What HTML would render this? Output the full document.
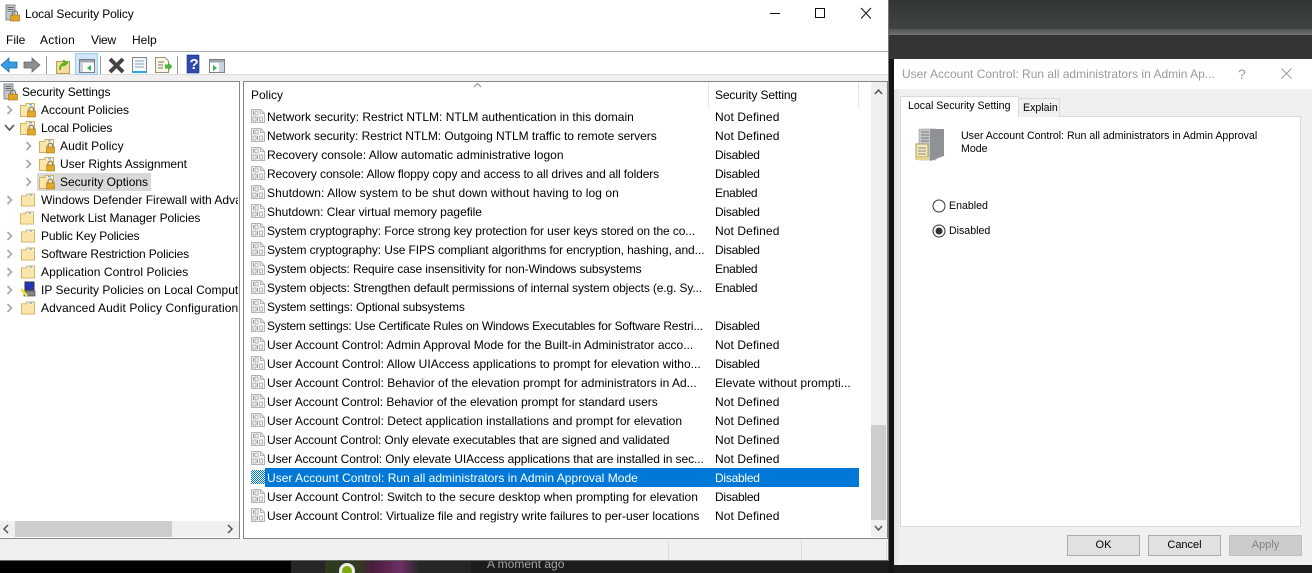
<!DOCTYPE html>
<html><head><meta charset="utf-8"><style>
html,body{margin:0;padding:0;width:1312px;height:573px;overflow:hidden;background:#1c1c1c}
body{position:relative;font:12px/16px "Liberation Sans",sans-serif;color:#000}
.a{position:absolute}
.t{position:absolute;white-space:nowrap;overflow:hidden}
svg{position:absolute;overflow:visible}
.r{position:absolute;left:267px;width:441px;height:16px;white-space:nowrap;overflow:hidden}
.s{position:absolute;left:715px;width:140px;height:16px;white-space:nowrap;overflow:hidden}
.nd{letter-spacing:.1px}
.di,.en{letter-spacing:-.25px}
.d{font-size:10.6px}
.btn{position:absolute;top:535px;width:71px;height:19px;border:1px solid #adadad;background:#e1e1e1;text-align:center;line-height:19px;font-size:11px}
</style></head><body>
<svg width="0" height="0" style="position:absolute">
<defs>
<symbol id="pol" viewBox="0 0 14 14" overflow="visible">
<path d="M.5.5H9.500L13.500 4.500V13.500H.5Z" fill="#f6f6f6" stroke="#b4b4b4"/><path d="M9.500.5V4.500H13.500" fill="none" stroke="#b4b4b4"/>
<rect x="2" y="2" width="1" height="4" fill="#9a9a9a"/><rect x="4" y="2" width="3" height="4" fill="none" stroke="#a6a6a6" stroke-width=".8"/>
<rect x="2" y="8" width="3" height="4" fill="none" stroke="#a6a6a6" stroke-width=".8"/><rect x="6" y="8" width="1" height="4" fill="#9a9a9a"/><rect x="8.500" y="8" width="3" height="4" fill="none" stroke="#a6a6a6" stroke-width=".8"/>
</symbol>
<symbol id="fld" viewBox="0 0 15 14" overflow="visible">
<path d="M.5 2.500H6V.5H14.500V13.500H.5Z" fill="#fbe6a8" stroke="#d0b06a"/><path d="M8 1.500H13.500V3H8Z" fill="#fff"/><rect x="9" y="1" width="3" height="1.500" fill="#7fb4dc"/>
</symbol>
<symbol id="lck" viewBox="0 0 15 14" overflow="visible">
<use href="#fld" width="15" height="14"/>
<path d="M9 8V6.500A2.300 2.300 0 0 1 13.600 6.500V8" fill="none" stroke="#7b7b7b" stroke-width="1.200"/>
<rect x="7.500" y="8" width="8" height="6" fill="#e0a92b" stroke="#a8761a" stroke-width=".6"/>
</symbol>
<symbol id="srv" viewBox="0 0 16 16" overflow="visible">
<rect x="1" y="0" width="9" height="15" fill="#c5c9ce" stroke="#5f656b" stroke-width=".7"/><rect x="2.500" y="2" width="6" height="1" fill="#5f656b"/><rect x="2.500" y="4" width="6" height="1" fill="#5f656b"/><rect x="2.500" y="6" width="6" height="1" fill="#8b9096"/>
<rect x="5.500" y="10" width="9" height="6" fill="#dfa725" stroke="#9c7114" stroke-width=".6"/>
<path d="M7.500 10V8.500A2.500 2.500 0 0 1 12.500 8.500V10" fill="none" stroke="#777" stroke-width="1.200"/>
</symbol>
<symbol id="chv" viewBox="0 0 8 10" overflow="visible"><path d="M1.500 1 5.500 5 1.500 9" fill="none" stroke="#a6a6a6" stroke-width="1.600"/></symbol>
<pattern id="chk" width="2" height="2" patternUnits="userSpaceOnUse"><rect width="2" height="2" fill="#fff"/><rect width="1" height="1" fill="#0078d7"/><rect x="1" y="1" width="1" height="1" fill="#0078d7"/></pattern>
</defs></svg>

<!-- background -->
<div class="a" style="left:889px;top:0;width:423px;height:29px;background:linear-gradient(#333636,#3f4343)"></div>
<div class="a" style="left:889px;top:29px;width:423px;height:6px;background:linear-gradient(#555,#666 70%,#777)"></div>
<div class="a" style="left:889px;top:35px;width:423px;height:24px;background:#343434"></div>
<div class="a" style="left:889px;top:59px;width:5px;height:514px;background:#141414"></div>
<div class="a" style="left:0;top:561px;width:291px;height:12px;background:#000"></div>
<div class="a" style="left:291px;top:561px;width:180px;height:12px;background:#262626"></div>
<div class="a" style="left:325px;top:561px;width:95px;height:12px;background:linear-gradient(90deg,#2c3a20,#333a22 35%,#4a1d3c 50%,#6d2f64 80%,#262626);"></div>
<div class="a" style="left:339px;top:563px;width:16px;height:16px;border-radius:50%;background:#7cab10;box-sizing:border-box;border:3px solid #eee"></div>
<div class="t" style="left:487px;top:556px;width:90px;height:17px;font-size:12px;color:#a4a4a4;line-height:16px">A moment ago</div>

<!-- main window -->
<div class="a" style="left:0;top:0;width:889px;height:561px;background:#fff;border-right:1px solid #777;box-sizing:border-box;border-bottom:1px solid #666"></div>
<svg style="left:5px;top:5px" width="16" height="17"><use href="#srv" width="16" height="16"/></svg>
<div class="t" style="left:25px;top:6px;height:16px;line-height:16px;letter-spacing:-.1px">Local Security Policy</div>
<svg style="left:770px;top:8px" width="100" height="14" fill="none" stroke="#111"><path d="M0 5.500H10"/><rect x="45.500" y=".5" width="9" height="9"/><path d="M91 0 101 10.500M101 0 91 10.500"/></svg>
<div class="t" style="left:6px;top:32px">File</div>
<div class="t" style="left:40px;top:32px;letter-spacing:.3px">Action</div>
<div class="t" style="left:91px;top:32px;letter-spacing:-.2px">View</div>
<div class="t" style="left:132px;top:32px">Help</div>
<div class="a" style="left:0;top:51px;width:888px;height:1px;background:#aeb0b4"></div>
<div class="a" style="left:0;top:74px;width:888px;height:7px;background:#f0f0f0;border-top:1px solid #dcdcdc;box-sizing:border-box"></div>

<!-- toolbar -->
<svg style="left:0;top:52px" width="240" height="22">
<path d="M1 13 9 6V10H17V16H9V20Z" fill="#3b9be3" stroke="#1d6ea8" stroke-width=".8"/>
<path d="M40 13 32 6V10H24V16H32V20Z" fill="#8e8e8e" stroke="#666" stroke-width=".8"/>
<rect x="46" y="4" width="1" height="18" fill="#999"/>
<path d="M56.500 9.500H69.500V21.500H56.500Z" fill="#f4dc9e" stroke="#bc9a55"/><path d="M60 18C60 13 63 11 66 11M63 8.500 67 11 63 14" fill="none" stroke="#5faf1e" stroke-width="2"/>
<rect x="75.500" y="1.500" width="22" height="21" fill="#cfe6f8" stroke="#99cbee"/>
<rect x="79.500" y="7.500" width="15" height="13" fill="#fff" stroke="#7b7f85"/><rect x="80" y="8" width="14" height="2.500" fill="#9ea5ad"/><rect x="80" y="11" width="3" height="9" fill="#c5d3df"/><path d="M91 13V19L87 16Z" fill="#3cae4b"/>
<rect x="100" y="4" width="1" height="18" fill="#999"/>
<path d="M110 7 123 20M123 7 110 20" stroke="#444" stroke-width="4"/>
<rect x="132.500" y="5.500" width="14" height="15" fill="#f6f8fb" stroke="#7f8489"/><rect x="133" y="19" width="13" height="2" fill="#2da8ea"/><path d="M135 9H144M135 12H144M135 15H144" stroke="#86a0bb"/>
<path d="M155.500 5.500H165L168.500 9V20.500H155.500Z" fill="#fcf7e3" stroke="#99917a"/><path d="M158 10H164M158 13H163M158 16H163" stroke="#777"/><path d="M165 12.500H168V10L172.500 14.500 168 19V16.500H165Z" fill="#49b54a"/>
<rect x="177" y="4" width="1" height="18" fill="#999"/>
<rect x="187" y="3" width="12" height="18" fill="#2f4bb0" stroke="#1d2f7e" stroke-width=".6"/><text x="189.500" y="17" fill="#fff" font-family="Liberation Sans" font-weight="bold" font-size="15">?</text>
<rect x="209.500" y="7.500" width="15" height="13" fill="#fff" stroke="#7b7f85"/><rect x="210" y="8" width="14" height="2.500" fill="#9ea5ad"/><rect x="219" y="11" width="5" height="9" fill="#c5d3df"/><path d="M213 13V19L217 16Z" fill="#3cae4b"/>
</svg>

<!-- panes -->
<div class="a" style="left:0;top:81px;width:240px;height:458px;border:1px solid #828790;border-left:0;box-sizing:border-box;background:#fff"></div>
<div class="a" style="left:243px;top:81px;width:645px;height:458px;border:1px solid #828790;box-sizing:border-box;background:#fff"></div>
<div class="a" style="left:0;top:539px;width:888px;height:21px;background:#f0f0f0"></div>
<div class="a" style="left:668px;top:541px;width:1px;height:19px;background:#dadada"></div>
<div class="a" style="left:801px;top:541px;width:1px;height:19px;background:#dadada"></div>
<div class="a" style="left:886px;top:541px;width:1px;height:19px;background:#dadada"></div>

<!-- tree -->
<svg style="left:3px;top:84px" width="16" height="16"><use href="#srv" width="16" height="16"/></svg>
<div class="t" style="left:22px;top:84px;letter-spacing:-.1px">Security Settings</div>
<svg style="left:0;top:100px" width="60" height="220">
<use href="#chv" x="6" y="5" width="8" height="10"/>
<path d="M5 25 9.500 30 14 25" fill="none" stroke="#555" stroke-width="1.600"/>
<use href="#chv" x="25" y="41" width="8" height="10"/>
<use href="#chv" x="25" y="59" width="8" height="10"/>
<use href="#chv" x="25" y="77" width="8" height="10"/>
<use href="#chv" x="6" y="95" width="8" height="10"/>
<use href="#chv" x="6" y="131" width="8" height="10"/>
<use href="#chv" x="6" y="149" width="8" height="10"/>
<use href="#chv" x="6" y="167" width="8" height="10"/>
<use href="#chv" x="6" y="185" width="8" height="10"/>
<use href="#chv" x="6" y="203" width="8" height="10"/>
</svg>
<div class="a" style="left:37px;top:173px;width:114px;height:18px;background:#d9d9d9"></div>
<svg style="left:0;top:100px" width="60" height="220">
<use href="#lck" x="20" y="3" width="15" height="14"/>
<use href="#lck" x="20" y="21" width="15" height="14"/>
<use href="#lck" x="39" y="39" width="15" height="14"/>
<use href="#lck" x="39" y="57" width="15" height="14"/>
<use href="#lck" x="39" y="75" width="15" height="14"/>
<use href="#fld" x="21" y="93" width="14" height="14"/>
<use href="#fld" x="20" y="111" width="14" height="14"/>
<use href="#fld" x="21" y="129" width="14" height="14"/>
<use href="#fld" x="21" y="147" width="14" height="14"/>
<use href="#fld" x="21" y="165" width="14" height="14"/>
<rect x="25" y="182" width="9" height="8" fill="#2437b8" stroke="#333"/><rect x="24" y="191" width="11" height="5" fill="#888" stroke="#333" stroke-width=".6"/><path d="M21 189 27 196" stroke="#f0df40" stroke-width="2.500"/>
<use href="#fld" x="21" y="201" width="14" height="14"/>
</svg>
<div class="t" style="left:41px;top:102px;width:197px">Account Policies</div>
<div class="t" style="left:41px;top:120px;width:197px;letter-spacing:-.15px">Local Policies</div>
<div class="t" style="left:60px;top:138px;width:178px;letter-spacing:.08px">Audit Policy</div>
<div class="t" style="left:60px;top:156px;width:178px;letter-spacing:-.05px">User Rights Assignment</div>
<div class="t" style="left:60px;top:174px;width:178px">Security Options</div>
<div class="t" style="left:41px;top:192px;width:197px">Windows Defender Firewall with Advanced Security</div>
<div class="t" style="left:41px;top:210px;width:197px;letter-spacing:-.07px">Network List Manager Policies</div>
<div class="t" style="left:41px;top:228px;width:197px;letter-spacing:-.16px">Public Key Policies</div>
<div class="t" style="left:41px;top:246px;width:197px;letter-spacing:-.14px">Software Restriction Policies</div>
<div class="t" style="left:41px;top:264px;width:197px;letter-spacing:.07px">Application Control Policies</div>
<div class="t" style="left:41px;top:282px;width:197px;letter-spacing:.02px">IP Security Policies on Local Computer</div>
<div class="t" style="left:41px;top:300px;width:197px;letter-spacing:.11px">Advanced Audit Policy Configuration</div>
<!-- h scroll -->
<div class="a" style="left:0;top:521px;width:239px;height:16px;background:#f0f0f0"></div>
<div class="a" style="left:15px;top:521px;width:157px;height:16px;background:#cdcdcd"></div>
<svg style="left:0;top:521px" width="239" height="16" fill="none" stroke="#555" stroke-width="1.500"><path d="M8 4 4 8 8 12M228 4 232 8 228 12"/></svg>

<!-- header -->
<div class="t" style="left:251px;top:87px">Policy</div>
<div class="t" style="left:715px;top:87px;letter-spacing:-.13px">Security Setting</div>
<div class="a" style="left:708px;top:82px;width:1px;height:25px;background:#e5e5e5"></div>
<div class="a" style="left:858px;top:82px;width:1px;height:25px;background:#e5e5e5"></div>
<svg style="left:473px;top:82px" width="10" height="6" fill="none" stroke="#8a8a8a"><path d="M1 5 4.500 1.500 8 5"/></svg>

<!-- selection -->
<div class="a" style="left:265px;top:468px;width:594px;height:19px;background:#0078d7"></div>

<!-- rows -->
<div class="r" style="top:109px">Network security: Restrict NTLM: NTLM authentication in this domain</div><div class="s nd" style="top:109px">Not Defined</div>
<div class="r" style="top:128px;letter-spacing:-.04px">Network security: Restrict NTLM: Outgoing NTLM traffic to remote servers</div><div class="s nd" style="top:128px">Not Defined</div>
<div class="r" style="top:147px;letter-spacing:.02px">Recovery console: Allow automatic administrative logon</div><div class="s di" style="top:147px">Disabled</div>
<div class="r" style="top:166px;letter-spacing:-.107px">Recovery console: Allow floppy copy and access to all drives and all folders</div><div class="s di" style="top:166px">Disabled</div>
<div class="r" style="top:185px;letter-spacing:.08px">Shutdown: Allow system to be shut down without having to log on</div><div class="s en" style="top:185px">Enabled</div>
<div class="r" style="top:204px;letter-spacing:-.03px">Shutdown: Clear virtual memory pagefile</div><div class="s di" style="top:204px">Disabled</div>
<div class="r" style="top:223px;letter-spacing:-.1px">System cryptography: Force strong key protection for user keys stored on the co...</div><div class="s nd" style="top:223px">Not Defined</div>
<div class="r" style="top:242px;letter-spacing:-.1px">System cryptography: Use FIPS compliant algorithms for encryption, hashing, and...</div><div class="s di" style="top:242px">Disabled</div>
<div class="r" style="top:261px;letter-spacing:-.13px">System objects: Require case insensitivity for non-Windows subsystems</div><div class="s en" style="top:261px">Enabled</div>
<div class="r" style="top:280px;letter-spacing:-.13px">System objects: Strengthen default permissions of internal system objects (e.g. Sy...</div><div class="s en" style="top:280px">Enabled</div>
<div class="r" style="top:299px;letter-spacing:-.14px">System settings: Optional subsystems</div>
<div class="r" style="top:318px;letter-spacing:-.22px">System settings: Use Certificate Rules on Windows Executables for Software Restri...</div><div class="s di" style="top:318px">Disabled</div>
<div class="r" style="top:337px">User Account Control: Admin Approval Mode for the Built-in Administrator acco...</div><div class="s nd" style="top:337px">Not Defined</div>
<div class="r" style="top:356px;letter-spacing:.01px">User Account Control: Allow UIAccess applications to prompt for elevation witho...</div><div class="s di" style="top:356px">Disabled</div>
<div class="r" style="top:375px;letter-spacing:.01px">User Account Control: Behavior of the elevation prompt for administrators in Ad...</div><div class="s" style="top:375px;letter-spacing:.04px">Elevate without prompti...</div>
<div class="r" style="top:394px;letter-spacing:-.03px">User Account Control: Behavior of the elevation prompt for standard users</div><div class="s nd" style="top:394px">Not Defined</div>
<div class="r" style="top:413px;letter-spacing:.01px">User Account Control: Detect application installations and prompt for elevation</div><div class="s nd" style="top:413px">Not Defined</div>
<div class="r" style="top:432px;letter-spacing:-.12px">User Account Control: Only elevate executables that are signed and validated</div><div class="s nd" style="top:432px">Not Defined</div>
<div class="r" style="top:451px;letter-spacing:-.08px">User Account Control: Only elevate UIAccess applications that are installed in sec...</div><div class="s nd" style="top:451px">Not Defined</div>
<div class="r" style="top:470px;color:#fff;letter-spacing:.03px">User Account Control: Run all administrators in Admin Approval Mode</div><div class="s di" style="top:470px;color:#fff">Disabled</div>
<div class="r" style="top:489px">User Account Control: Switch to the secure desktop when prompting for elevation</div><div class="s di" style="top:489px">Disabled</div>
<div class="r" style="top:508px;letter-spacing:-.05px">User Account Control: Virtualize file and registry write failures to per-user locations</div><div class="s nd" style="top:508px">Not Defined</div>
<svg style="left:251px;top:109px" width="14" height="420">
<use href="#pol" y="0" width="14" height="14"/><use href="#pol" y="19" width="14" height="14"/><use href="#pol" y="38" width="14" height="14"/><use href="#pol" y="57" width="14" height="14"/><use href="#pol" y="76" width="14" height="14"/><use href="#pol" y="95" width="14" height="14"/><use href="#pol" y="114" width="14" height="14"/><use href="#pol" y="133" width="14" height="14"/><use href="#pol" y="152" width="14" height="14"/><use href="#pol" y="171" width="14" height="14"/><use href="#pol" y="190" width="14" height="14"/><use href="#pol" y="209" width="14" height="14"/><use href="#pol" y="228" width="14" height="14"/><use href="#pol" y="247" width="14" height="14"/><use href="#pol" y="266" width="14" height="14"/><use href="#pol" y="285" width="14" height="14"/><use href="#pol" y="304" width="14" height="14"/><use href="#pol" y="323" width="14" height="14"/><use href="#pol" y="342" width="14" height="14"/>
<rect y="361" width="14" height="14" fill="url(#chk)"/>
<use href="#pol" y="380" width="14" height="14"/><use href="#pol" y="399" width="14" height="14"/>
</svg>
<!-- v scroll -->
<div class="a" style="left:871px;top:82px;width:16px;height:455px;background:#f0f0f0"></div>
<div class="a" style="left:871px;top:425px;width:15px;height:95px;background:#cdcdcd"></div>
<svg style="left:871px;top:82px" width="15" height="455" fill="none" stroke="#555" stroke-width="1.500"><path d="M4 12 7.500 8 11 12M4 444 7.500 448 11 444"/></svg>

<!-- dialog -->
<div class="a" style="left:894px;top:59px;width:418px;height:506px;background:#f0f0f0"></div>
<div class="a" style="left:894px;top:89px;width:6px;height:476px;background:linear-gradient(90deg,#e2e2e2,#f0f0f0)"></div>
<div class="a" style="left:894px;top:59px;width:418px;height:30px;background:#fff"></div>
<div class="t" style="left:902px;top:66px;width:330px;color:#9a9a9a">User Account Control: Run all administrators in Admin Ap...</div>
<div class="t" style="left:1238px;top:66px;color:#9a9a9a;font-size:14px">?</div>
<svg style="left:1281px;top:68px" width="11" height="11" fill="none" stroke="#9a9a9a"><path d="M.5.5 10.500 10.500M10.500.5.500 10.500"/></svg>
<div class="a" style="left:900px;top:116px;width:401px;height:411px;background:#fff;border:1px solid #d9d9d9;box-sizing:border-box"></div>
<div class="a" style="left:1018px;top:98px;width:42px;height:19px;background:#f0f0f0;border:1px solid #d9d9d9;border-bottom:0;box-sizing:border-box"></div>
<div class="t d" style="left:1023px;top:100px">Explain</div>
<div class="a" style="left:900px;top:96px;width:119px;height:21px;background:#fff;border:1px solid #d9d9d9;border-bottom:0;box-sizing:border-box"></div>
<div class="t d" style="left:908px;top:98px">Local Security Setting</div>
<svg style="left:914px;top:128px" width="32" height="34">
<path d="M5 1H22V32H5Z" fill="#c4c7c9" stroke="#8d9092" stroke-width=".5"/><path d="M16 1H30V28L16 33Z" fill="#8e9294"/><path d="M7 4H15M7 7H15M7 10H15M7 13H15" stroke="#777"/>
<path d="M2 16H14V29H2Z" fill="#f5e8bd" stroke="#b09a5c"/><path d="M4 20H12M4 23H12M4 26H12" stroke="#8a8a7a"/><rect x="1" y="29" width="14" height="3" fill="#e7d28f"/>
</svg>
<div class="t d" style="left:961px;top:128px;width:320px">User Account Control: Run all administrators in Admin Approval</div>
<div class="t d" style="left:961px;top:141px;width:320px">Mode</div>
<svg style="left:932px;top:199px" width="16" height="40"><circle cx="7" cy="7" r="6" fill="#fff" stroke="#333"/><circle cx="7" cy="32" r="6" fill="#fff" stroke="#333"/><circle cx="7" cy="32" r="3.500" fill="#333"/></svg>
<div class="t d" style="left:949px;top:198px">Enabled</div>
<div class="t d" style="left:949px;top:223px">Disabled</div>
<div class="btn" style="left:1067px">OK</div>
<div class="btn" style="left:1148px">Cancel</div>
<div class="btn" style="left:1229px;background:#ccc;color:#838383;border-color:#bfbfbf">Apply</div>
</body></html>
